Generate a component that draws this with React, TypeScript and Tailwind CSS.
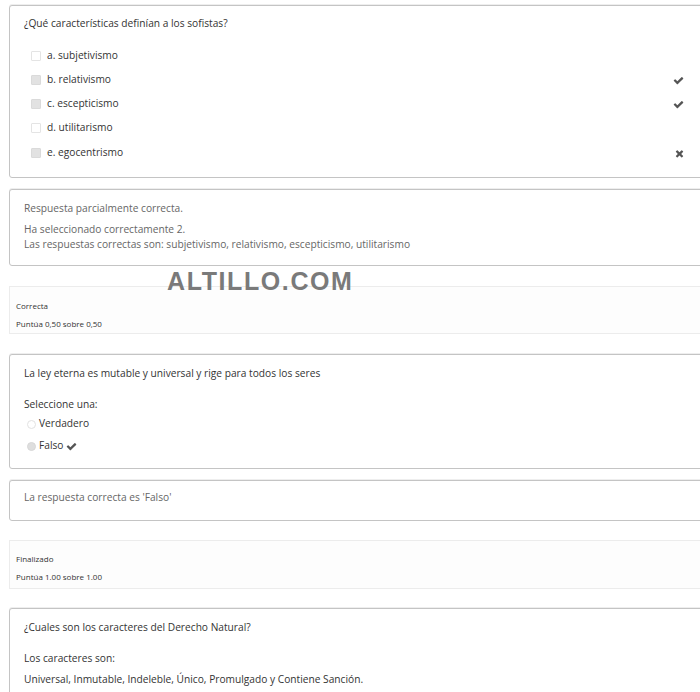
const font = { fontFamily: "'Open Sans', 'Noto Sans', sans-serif" }

const opciones = [
    { label: "a. subjetivismo", checked: false, mark: null },
    { label: "b. relativismo", checked: true, mark: "ok" },
    { label: "c. escepticismo", checked: true, mark: "ok" },
    { label: "d. utilitarismo", checked: false, mark: null },
    { label: "e. egocentrismo", checked: true, mark: "bad" },
]

function IconCheck({ className = "" }: { className?: string }) {
    return (
        <svg viewBox="0 0 1792 1792" className={className} fill="currentColor">
            <path d="M1671 566q0 40-28 68l-724 724-136 136q-28 28-68 28t-68-28l-136-136-362-362q-28-28-28-68t28-68l136-136q28-28 68-28t68 28l294 295 656-657q28-28 68-28t68 28l136 136q28 28 28 68z" />
        </svg>
    )
}

function IconTimes({ className = "" }: { className?: string }) {
    return (
        <svg viewBox="0 0 1408 1792" className={className} fill="currentColor">
            <path d="M1298 1322q0 40-28 68l-136 136q-28 28-68 28t-68-28l-294-294-294 294q-28 28-68 28t-68-28l-136-136q-28-28-28-68t28-68l294-294-294-294q-28-28-28-68t28-68l136-136q28-28 68-28t68 28l294 294 294-294q28-28 68-28t68 28l136 136q28 28 28 68t-28 68l-294 294 294 294q28 28 28 68z" />
        </svg>
    )
}

function Caja({ children, className = "" }: { children: React.ReactNode; className?: string }) {
    return (
        <div className={"-mr-3 rounded-[3px] border border-[#c4c4c4] bg-white shadow-[0_-1px_0_#eeeeee] " + className}>
            {children}
        </div>
    )
}

function Estado({ children, className = "" }: { children: React.ReactNode; className?: string }) {
    return (
        <div className={"-mr-3 border border-[#ececec] bg-[#fdfdfd] px-[6px] text-[8px] text-[#333] " + className}>
            {children}
        </div>
    )
}

function CheckBox({ checked }: { checked: boolean }) {
    return (
        <span className={"h-[10px] w-[10px] rounded-[1px] border " + (checked ? "border-[#dadada] bg-[#e2e2e2]" : "border-[#e4e4e4] bg-white")} />
    )
}

export default function App() {
    return (
        <div className="relative h-[692px] w-[700px] overflow-hidden bg-white pl-[9px] pt-[5px] text-[#333]" style={font}>
            {/* pregunta 1 */}
            <Caja className="h-[173px] pl-[14px] pt-[9px] text-[10.2px]">
                <div className="h-[16px] leading-[16px]">¿Qué características definían a los sofistas?</div>
                <div className="mt-[13px] pr-[27px]">
                    {opciones.map((o, i) => (
                        <div key={o.label} className={"flex h-[24px] items-center " + (i === 4 ? "mt-[1px]" : "")}>
                            <span className="ml-[7px] mr-[6px] flex">
                                <CheckBox checked={o.checked} />
                            </span>
                            <span>{o.label}</span>
                            <span className="flex-1" />
                            {o.mark === "ok" && <IconCheck className="h-[11px] w-[11px] text-[#555]" />}
                            {o.mark === "bad" && <IconTimes className="h-[11px] w-[9px] text-[#555]" />}
                        </div>
                    ))}
                </div>
            </Caja>

            {/* retroalimentación */}
            <Caja className="mt-[11px] h-[77px] pl-[14px] pt-[10px] text-[10.2px] text-[#666]">
                <div className="h-[16px] leading-[16px]">Respuesta parcialmente correcta.</div>
                <div className="mt-[6px] h-[15px] leading-[15px]">Ha seleccionado correctamente 2.</div>
                <div className="h-[15px] leading-[15px]">Las respuestas correctas son: subjetivismo, relativismo, escepticismo, utilitarismo</div>
            </Caja>

            <Estado className="mt-[20px] h-[48px] pt-[12px]">
                <div className="h-[14px] leading-[14px]">Correcta</div>
                <div className="mt-[4px] h-[14px] leading-[14px]">Puntúa 0,50 sobre 0,50</div>
            </Estado>

            {/* pregunta 2 */}
            <Caja className="mt-[20px] h-[115px] pl-[14px] pt-[10px] text-[10.2px]">
                <div className="h-[16px] leading-[16px]">La ley eterna es mutable y universal y rige para todos los seres</div>
                <div className="mt-[15px] h-[16px] leading-[16px]">Seleccione una:</div>
                <div className="mt-[2px] flex h-[20px] items-center">
                    <span className="ml-[3px] mr-[3px] h-[9px] w-[9px] rounded-full border border-[#e2e2e2] bg-white" />
                    <span>Verdadero</span>
                </div>
                <div className="mt-[2px] flex h-[20px] items-center">
                    <span className="ml-[3px] mr-[3px] h-[9px] w-[9px] rounded-full border border-[#d8d8d8] bg-[#dedede]" />
                    <span>Falso</span>
                    <IconCheck className="ml-[3px] h-[11px] w-[11px] text-[#555]" />
                </div>
            </Caja>

            <Caja className="mt-[11px] h-[41px] pl-[14px] pt-[8px] text-[10.2px] text-[#666]">
                <div className="h-[16px] leading-[16px]">La respuesta correcta es 'Falso'</div>
            </Caja>

            <Estado className="mt-[19px] h-[49px] pt-[11px]">
                <div className="h-[14px] leading-[14px]">Finalizado</div>
                <div className="mt-[4px] h-[14px] leading-[14px]">Puntúa 1.00 sobre 1.00</div>
            </Estado>

            {/* pregunta 3 */}
            <Caja className="mt-[19px] h-[120px] pl-[14px] pt-[10px] text-[10.2px]">
                <div className="h-[16px] leading-[16px]">¿Cuales son los caracteres del Derecho Natural?</div>
                <div className="mt-[15px] h-[16px] leading-[16px]">Los caracteres son:</div>
                <div className="mt-[5px] h-[16px] leading-[16px]">Universal, Inmutable, Indeleble, Único, Promulgado y Contiene Sanción.</div>
            </Caja>

            {/* marca de agua */}
            <div
                className="absolute left-[167px] top-[266px] text-[25px] font-bold leading-[30px] tracking-[1.6px] text-[#7a7a7a]"
                style={{ fontFamily: "'Liberation Sans', Arial, sans-serif" }}
            >
                ALTILLO.COM
            </div>
        </div>
    )
}
